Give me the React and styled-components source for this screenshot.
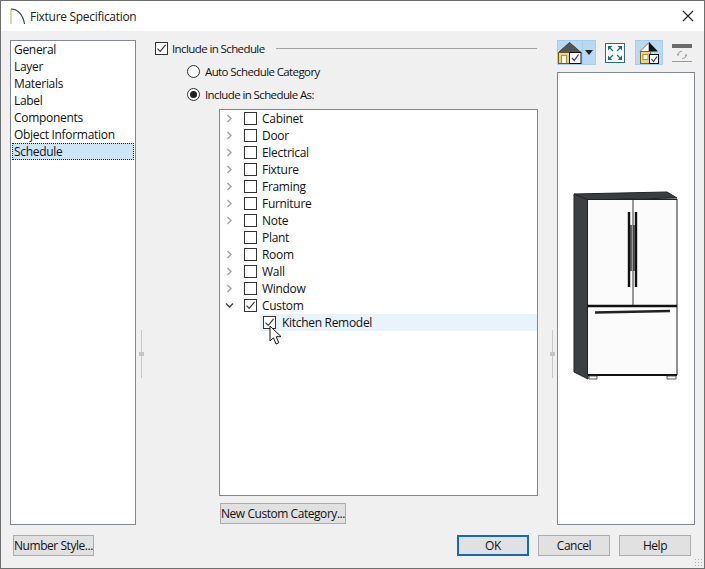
import React from "react";
import styled, { createGlobalStyle } from "styled-components";

const GlobalStyle = createGlobalStyle`
  html, body {
    margin: 0;
    padding: 0;
    background: #f0f0f0;
  }
`;

const sideItems = ["General", "Layer", "Materials", "Label", "Components", "Object Information", "Schedule"];
const categories = ["Cabinet", "Door", "Electrical", "Fixture", "Framing", "Furniture", "Note", "Plant", "Room", "Wall", "Window"];

function CheckMark() {
  return (
    <svg width="11" height="11" viewBox="0 0 11 11">
      <path d="M1.5 5.6 L4.2 8.4 L9.6 1.8" fill="none" stroke="#333" strokeWidth="1.1" />
    </svg>
  );
}

function Chevron({ open }) {
  return (
    <svg width="9" height="9" viewBox="0 0 9 9">
      {open
        ? <path d="M1 2.5 L4.5 6 L8 2.5" fill="none" stroke="#444" strokeWidth="1.5" />
        : <path d="M2.5 1 L6 4.5 L2.5 8" fill="none" stroke="#a6a6a6" strokeWidth="1.5" />}
    </svg>
  );
}

function HouseViewIcon() {
  return (
    <svg width="24" height="23" viewBox="0 0 24 23">
      <path d="M0.5 11.5 L11.5 1.5 L23 11.5 Z" fill="#555" stroke="#3c3c3c" />
      <rect x="0.5" y="11.5" width="11" height="11" fill="#f3d27c" stroke="#6b5a22" />
      <path d="M3.5 22 V14.5 H8.5 V22" fill="#fff" stroke="#b88f20" strokeWidth="1.2" />
      <rect x="11.5" y="11.5" width="11.5" height="11" fill="#fff" stroke="#111" />
      <path d="M14 17 L16.3 19.5 L20.5 13.5" fill="none" stroke="#2d2db0" strokeWidth="1.2" />
    </svg>
  );
}

function FitIcon() {
  return (
    <svg width="20" height="20" viewBox="0 0 20 20">
      <rect x="0.5" y="0.5" width="19" height="19" fill="#fff" stroke="#2a6f85" />
      <path d="M3 3 H7.5 L3 7.5 Z M17 3 V7.5 L12.5 3 Z M3 17 V12.5 L7.5 17 Z M17 17 H12.5 L17 12.5 Z" fill="#1e6f86" />
      <path d="M5 5 L8 8 M15 5 L12 8 M5 15 L8 12 M15 15 L12 12" stroke="#1e6f86" strokeWidth="1.2" />
    </svg>
  );
}

function SplitHouseIcon() {
  return (
    <svg width="20" height="23" viewBox="0 0 20 23">
      <path d="M1 10.5 L10 1.5 V10.5 Z" fill="#fff" stroke="#777" />
      <path d="M10 1 L19 10.5 H10 Z" fill="#111" />
      <rect x="1.5" y="10.5" width="10" height="12" fill="#f3d27c" stroke="#77652a" />
      <rect x="4" y="13.5" width="5" height="5" fill="#fff" stroke="#b88f20" />
      <rect x="10.5" y="13.5" width="9" height="9" fill="#fff" stroke="#111" />
      <path d="M12.5 18 L14.5 20.5 L18 15.5" fill="none" stroke="#2d2db0" strokeWidth="1.2" />
    </svg>
  );
}

function RefreshBarIcon() {
  return (
    <svg width="21" height="20" viewBox="0 0 21 20">
      <rect x="0" y="1" width="20" height="4" fill="#6b6b6b" />
      <path d="M6 12 A3.5 3.5 0 0 1 10 8.5 M14 12 A3.5 3.5 0 0 1 10 15.5" fill="none" stroke="#a9a9a9" strokeWidth="1.2" />
      <path d="M4.5 11 L7.5 11 L6 13.5 Z M12.5 13 L15.5 13 L14 10.5 Z" fill="#a9a9a9" />
      <rect x="0" y="18" width="20" height="1" fill="#9a9a9a" />
    </svg>
  );
}

function Fridge() {
  return (
    <svg width="108" height="190" viewBox="0 0 108 190">
      <path d="M2 3 L16 8 L16 188 L2 181 Z" fill="#3d4042" stroke="#222" />
      <path d="M2 3 L95 1 L105 7 L16 9 Z" fill="#3a3d3f" stroke="#222" />
      <rect x="15.5" y="8.5" width="89.5" height="175" fill="#fbfbfb" stroke="#222" />
      <path d="M15 115 H105" stroke="#111" strokeWidth="2.4" />
      <path d="M61 9 V114" stroke="#333" strokeWidth="1" />
      <path d="M57 21 V96 M64 21 V96" stroke="#111" strokeWidth="2.4" />
      <path d="M59 34 V80 M62 34 V80" stroke="#222" strokeWidth="1.4" />
      <path d="M23 121.5 L98 120" stroke="#222" strokeWidth="2.6" />
      <path d="M16 184 H105" stroke="#111" strokeWidth="2" />
      <path d="M17 185 V188 H25 V185 Z M95 185 V188 H104 V185 Z" fill="#fff" stroke="#333" strokeWidth="0.8" />
    </svg>
  );
}

export default function App() {
  return (
    <>
      <GlobalStyle />
      <Dialog>
        <TitleBar>
          <TitleLeft>
            <svg width="16" height="18" viewBox="0 0 16 18">
              <path d="M1 17 V2" stroke="#b5c46a" strokeWidth="1.2" fill="none" />
              <path d="M1 2 C8 2 13 8 14.5 17" stroke="#333" strokeWidth="1.1" fill="none" />
            </svg>
            <TitleText>Fixture Specification</TitleText>
          </TitleLeft>
          <svg width="12" height="12" viewBox="0 0 12 12">
            <path d="M1 1 L11 11 M11 1 L1 11" stroke="#222" strokeWidth="1.1" />
          </svg>
        </TitleBar>

        <Main>
          <SideList>
            {sideItems.map((item) => (
              <SideItem key={item} $active={item === "Schedule"}>{item}</SideItem>
            ))}
          </SideList>

          <Splitter $width={19} $offset={5}><Grip /></Splitter>

          <Center>
            <GroupRow>
              <CheckBox $checked><CheckMark /></CheckBox>
              <OptionLabel>Include in Schedule</OptionLabel>
              <GroupLine />
            </GroupRow>
            <RadioRow>
              <Radio />
              <OptionLabel>Auto Schedule Category</OptionLabel>
            </RadioRow>
            <RadioRow>
              <Radio $on />
              <OptionLabel>Include in Schedule As:</OptionLabel>
            </RadioRow>

            <Tree>
              {categories.map((name) => (
                <TreeRow key={name}>
                  <Arrow>{name !== "Plant" && <Chevron />}</Arrow>
                  <CheckBox />
                  <Label>{name}</Label>
                </TreeRow>
              ))}
              <TreeRow>
                <Arrow><Chevron open /></Arrow>
                <CheckBox $checked><CheckMark /></CheckBox>
                <Label>Custom</Label>
              </TreeRow>
              <ChildRow>
                <CheckBox $checked><CheckMark /></CheckBox>
                <Label>Kitchen Remodel</Label>
                <Cursor width="14" height="21" viewBox="0 0 14 21">
                  <path d="M1 1 V16 L4.5 12.8 L7 19 L9.8 17.8 L7.2 11.8 L12 11.6 Z" fill="#fff" stroke="#111" strokeWidth="1" />
                </Cursor>
              </ChildRow>
            </Tree>

            <PushButton>New Custom Category...</PushButton>
          </Center>

          <Splitter $width={20} $offset={15}><Grip /></Splitter>

          <Right>
            <Toolbar>
              <ToolGroup>
                <HouseViewIcon />
                <DropPart>
                  <svg width="8" height="5" viewBox="0 0 8 5"><path d="M0 0 H8 L4 5 Z" fill="#222" /></svg>
                </DropPart>
              </ToolGroup>
              <ToolIcon $width={20}><FitIcon /></ToolIcon>
              <ToolGroup $pad>
                <SplitHouseIcon />
              </ToolGroup>
              <ToolIcon $width={21}><RefreshBarIcon /></ToolIcon>
            </Toolbar>
            <Preview>
              <Fridge />
            </Preview>
          </Right>
        </Main>

        <Footer>
          <FooterButton $width={81}>Number Style...</FooterButton>
          <FooterRight>
            <FooterButton $width={72} $default>OK</FooterButton>
            <FooterButton $width={72}>Cancel</FooterButton>
            <FooterButton $width={72}>Help</FooterButton>
          </FooterRight>
          <ResizeGrip />
        </Footer>
      </Dialog>
    </>
  );
}

const Dialog = styled.div`
  position: relative;
  box-sizing: border-box;
  width: 705px;
  height: 569px;
  border: 1px solid #6f6f6f;
  background: #f0f0f0;
  display: flex;
  flex-direction: column;
  font-family: "Open Sans", "Noto Sans", sans-serif;
  font-size: 12px;
  letter-spacing: -0.3px;
  color: #111;
`;

const TitleBar = styled.div`
  height: 30px;
  flex: none;
  background: #fff;
  display: flex;
  align-items: center;
  justify-content: space-between;
  padding: 0 10px 0 9px;
`;

const TitleLeft = styled.div`
  display: flex;
  align-items: center;
  gap: 4px;
`;

const TitleText = styled.span`
  font-size: 12px;
  color: #222;
`;

const Main = styled.div`
  display: flex;
  padding: 9px 0 0 9px;
  height: 485px;
  flex: none;
`;

const SideList = styled.div`
  box-sizing: border-box;
  width: 126px;
  height: 485px;
  flex: none;
  background: #fff;
  border: 1px solid #828790;
  padding: 0 1px;
  line-height: 17px;
`;

const SideItem = styled.div`
  box-sizing: border-box;
  height: 17px;
  padding-left: 2px;
  background: ${(p) => (p.$active ? "#cde6f7" : "transparent")};
  outline: ${(p) => (p.$active ? "1px dotted #222" : "none")};
  outline-offset: -1px;
`;

const Splitter = styled.div`
  box-sizing: border-box;
  width: ${(p) => p.$width}px;
  flex: none;
  padding: 290px 0 0 ${(p) => p.$offset}px;
`;

const Grip = styled.div`
  position: relative;
  width: 1px;
  height: 48px;
  background: #c8c8c8;
  &::after {
    content: "";
    position: absolute;
    left: -2px;
    top: 22px;
    width: 5px;
    height: 4px;
    background: #c4c4c4;
  }
`;

const Center = styled.div`
  width: 382px;
  flex: none;
  display: flex;
  flex-direction: column;
`;

const GroupRow = styled.div`
  display: flex;
  align-items: center;
  gap: 4px;
  height: 17px;
`;

const GroupLine = styled.div`
  flex: 1;
  height: 1px;
  margin-left: 7px;
  background: #a0a0a0;
`;

const RadioRow = styled.div`
  display: flex;
  align-items: center;
  gap: 5px;
  height: 17px;
  margin: 6px 0 0 32px;
`;

const Radio = styled.div`
  box-sizing: border-box;
  width: 13px;
  height: 13px;
  flex: none;
  border-radius: 50%;
  border: 1px solid #333;
  background: #fff;
  position: relative;
  &::after {
    content: "";
    display: ${(p) => (p.$on ? "block" : "none")};
    position: absolute;
    left: 2px;
    top: 2px;
    width: 7px;
    height: 7px;
    border-radius: 50%;
    background: #222;
  }
`;

const Label = styled.span`
  white-space: nowrap;
  line-height: 17px;
`;

const OptionLabel = styled(Label)`
  font-size: 11.5px;
  letter-spacing: -0.6px;
`;

const CheckBox = styled.div`
  box-sizing: border-box;
  width: 13px;
  height: 13px;
  flex: none;
  border: 1px solid #333;
  background: #fff;
  display: flex;
  align-items: center;
  justify-content: center;
`;

const Tree = styled.div`
  box-sizing: border-box;
  margin: 6px 0 0 64px;
  width: 319px;
  height: 387px;
  background: #fff;
  border: 1px solid #828790;
`;

const TreeRow = styled.div`
  display: flex;
  align-items: center;
  height: 17px;
  gap: 5px;
  padding-left: 2px;
  & > :nth-child(2) {
    margin-left: 3px;
  }
`;

const Arrow = styled.div`
  width: 14px;
  height: 17px;
  flex: none;
  display: flex;
  align-items: center;
  justify-content: center;
`;

const ChildRow = styled.div`
  position: relative;
  display: flex;
  align-items: center;
  gap: 6px;
  height: 17px;
  margin-left: 40px;
  padding-left: 3px;
  background: #e8f3fb;
`;

const Cursor = styled.svg`
  position: absolute;
  left: 9px;
  top: 11px;
`;

const PushButton = styled.button`
  box-sizing: border-box;
  align-self: flex-start;
  margin: 7px 0 0 65px;
  height: 21px;
  width: 126px;
  padding: 0;
  border: 1px solid #adadad;
  background: #e1e1e1;
  font: inherit;
  letter-spacing: -0.45px;
  white-space: nowrap;
  color: #111;
`;

const Right = styled.div`
  width: 138px;
  flex: none;
  display: flex;
  flex-direction: column;
`;

const Toolbar = styled.div`
  height: 25px;
  display: flex;
  align-items: center;
  gap: 9px;
  margin-bottom: 7px;
`;

const ToolGroup = styled.div`
  box-sizing: border-box;
  height: 25px;
  display: flex;
  align-items: center;
  background: #b9d9f2;
  border: 1px solid #a4cdee;
  padding: ${(p) => (p.$pad ? "0 3px" : "0")};
  margin-left: ${(p) => (p.$pad ? "1px" : "0")};
`;

const DropPart = styled.div`
  box-sizing: border-box;
  height: 100%;
  width: 13px;
  border-left: 1px solid #a4cdee;
  display: flex;
  align-items: center;
  justify-content: center;
`;

const ToolIcon = styled.div`
  width: ${(p) => p.$width}px;
  display: flex;
  align-items: center;
`;

const Preview = styled.div`
  box-sizing: border-box;
  flex: 1;
  background: #fff;
  border: 1px solid #828790;
  padding: 118px 0 0 14px;
`;

const Footer = styled.div`
  display: flex;
  justify-content: space-between;
  padding: 10px 13px 0 12px;
`;

const FooterRight = styled.div`
  display: flex;
  gap: 9px;
`;

const FooterButton = styled.button`
  box-sizing: border-box;
  width: ${(p) => p.$width}px;
  height: 21px;
  padding: 0;
  background: #e1e1e1;
  border: ${(p) => (p.$default ? "2px solid #0f6cb5" : "1px solid #adadad")};
  font: inherit;
  letter-spacing: -0.45px;
  white-space: nowrap;
  color: #111;
`;

const ResizeGrip = styled.div`
  position: absolute;
  right: 1px;
  bottom: 1px;
  width: 9px;
  height: 9px;
  background-image: radial-gradient(#b0b0b0 1px, transparent 1px);
  background-size: 3px 3px;
`;
